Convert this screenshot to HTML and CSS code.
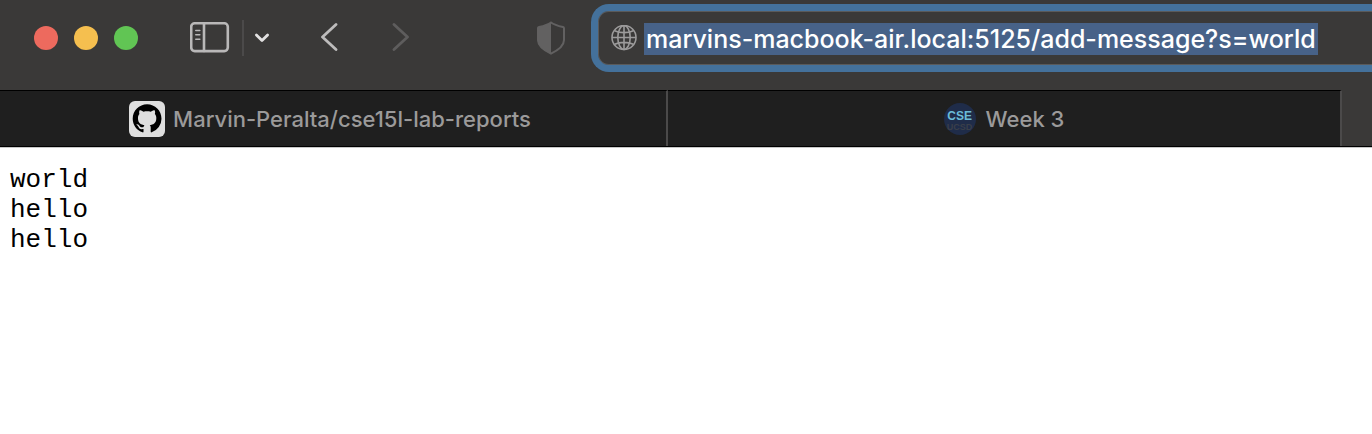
FILE: index.html
```html
<!DOCTYPE html>
<html lang="en">
<head>
<meta charset="utf-8">
<title>add-message</title>
<link rel="stylesheet" href="styles.css">
</head>
<body>
<header class="toolbar">
  <div class="window-controls">
    <button class="dot dot-close" aria-label="Close"></button>
    <button class="dot dot-minimize" aria-label="Minimize"></button>
    <button class="dot dot-zoom" aria-label="Zoom"></button>
  </div>
  <div class="sidebar-controls">
    <button class="icon-button" aria-label="Show sidebar">
      <svg width="40" height="32" viewBox="0 0 40 32" fill="none" stroke="#b9b8b8" stroke-width="2.6" stroke-linecap="round">
        <rect x="1.2" y="1.300" width="36.6" height="27.8" rx="3.5"/>
        <path d="M14 1.300V29"/>
        <path d="M5.8 8.500h4M5.8 12.800h4M5.8 17.200h4" stroke-width="1.6"/>
      </svg>
    </button>
    <span class="separator"></span>
    <button class="icon-button" aria-label="Tab groups">
      <svg width="16" height="12" viewBox="0 0 16 12" fill="none" stroke="#e2e1e1" stroke-width="2.8" stroke-linecap="round" stroke-linejoin="round"><path d="M2.4 3l5.6 5.6L13.6 3"/></svg>
    </button>
  </div>
  <div class="history-controls">
    <button class="icon-button" aria-label="Back">
      <svg width="18" height="30" viewBox="0 0 18 30" fill="none" stroke="#bdbcbc" stroke-width="2.8" stroke-linecap="round" stroke-linejoin="round"><path d="M16 1.500L2.5 14 16 26.500"/></svg>
    </button>
    <button class="icon-button" aria-label="Forward">
      <svg width="18" height="30" viewBox="0 0 18 30" fill="none" stroke="#5e5d5d" stroke-width="2.8" stroke-linecap="round" stroke-linejoin="round"><path d="M2 1.500L15.500 14 2 26.500"/></svg>
    </button>
  </div>
  <button class="icon-button" aria-label="Privacy report">
    <svg width="28" height="34" viewBox="0 0 28 34">
      <path d="M14 1.500C17 3.700 21.500 5 26 6c.7.200 1 .7 1 1.300V19c0 6.500-6.500 10.500-13 13.600C7.500 29.500 1 25.500 1 19V7.300C1 6.700 1.300 6.200 2 6 6.500 5 11 3.700 14 1.500z" fill="none" stroke="#626161" stroke-width="2"/>
      <path d="M14 1C11 3.500 6.500 5 1.500 6 1 6.200.5 6.600.5 7.300V19c0 6.500 7 11 13.500 14z" fill="#626161"/>
    </svg>
  </button>
  <label class="address">
    <svg width="26" height="26" viewBox="0 0 26 26" fill="none" stroke="#9c9b9b" stroke-width="1.6">
      <circle cx="13" cy="12.500" r="12"/>
      <ellipse cx="13" cy="12.500" rx="6.200" ry="12"/>
      <path d="M13 .5v24M1 12.500h24M3.600 5.700c5.500 2.600 13.300 2.600 18.800 0M3.600 19.300c5.500-2.600 13.300-2.600 18.800 0"/>
    </svg>
    <input class="url" type="text" size="46" aria-label="Address" spellcheck="false" value="marvins-macbook-air.local:5125/add-message?s=world">
  </label>
</header>
<nav class="tabs">
  <a class="tab tab-reports" href="#reports">
    <svg width="36" height="36" viewBox="0 0 36 36">
      <rect width="36" height="36" rx="6" fill="#dfdfdf"/>
      <path transform="translate(3.700 3.300) scale(1.800)" fill="#000" d="M8 0C3.580 0 0 3.580 0 8c0 3.540 2.290 6.530 5.470 7.590.4.070.55-.17.55-.38 0-.19-.01-.82-.01-1.490-2.010.37-2.530-.49-2.690-.94-.09-.23-.48-.94-.82-1.130-.28-.15-.68-.52-.01-.53.63-.01 1.080.58 1.230.82.72 1.210 1.870.87 2.330.66.07-.52.28-.87.51-1.070-1.780-.2-3.640-.89-3.640-3.950 0-.87.31-1.590.82-2.150-.08-.2-.36-1.020.08-2.120 0 0 .67-.21 2.200.82.64-.18 1.320-.27 2-.27s1.360.09 2 .27c1.530-1.040 2.200-.82 2.200-.82.44 1.100.16 1.920.08 2.120.51.56.82 1.270.82 2.150 0 3.070-1.870 3.750-3.650 3.950.29.25.54.73.54 1.480 0 1.070-.01 1.930-.01 2.200 0 .21.15.46.55.38A8.010 8.010 0 0 0 16 8c0-4.420-3.580-8-8-8z"/>
    </svg>
    <span>Marvin-Peralta/cse15l-lab-reports</span>
  </a>
  <a class="tab" href="#week3">
    <span class="cse-icon"><span class="cse-top">CSE</span><span class="cse-bottom">UCSD</span></span>
    <span>Week 3</span>
  </a>
</nav>
<main class="page">
<pre class="messages">world
hello
hello</pre>
</main>
</body>
</html>
```
FILE: styles.css
```css
* { box-sizing: border-box; }

body {
  margin: 0;
  background: #fff;
  font-family: Inter, "Liberation Sans", sans-serif;
  overflow-x: hidden;
}

button {
  padding: 0;
  border: 0;
  background: none;
}

svg { display: block; flex: none; }

.toolbar {
  display: flex;
  align-items: center;
  height: 90px;
  padding: 0 0 14px 34px;
  background: #3a3938;
}

.window-controls {
  display: flex;
  gap: 16px;
  margin-right: 52px;
}

.dot {
  width: 24px;
  height: 24px;
  border-radius: 50%;
}

.dot-close { background: #ed6a5e; }
.dot-minimize { background: #f5bf4f; }
.dot-zoom { background: #61c554; }

.sidebar-controls {
  display: flex;
  align-items: center;
  gap: 12px;
  margin-right: 50px;
}

.separator {
  width: 2px;
  height: 36px;
  background: #4b4a4a;
}

.sidebar-controls .icon-button:last-child { margin-left: -2px; }

.history-controls {
  display: flex;
  gap: 54px;
  margin-right: 127px;
}

.address {
  display: flex;
  flex: 1;
  align-items: center;
  gap: 7px;
  min-width: 0;
  height: 68px;
  margin-left: 26px;
  padding-left: 13px;
  border: 7px solid #44719b;
  border-right: 0;
  border-radius: 18px 0 0 18px;
  box-shadow: inset 0 1px #5a5a5a, inset 0 -1px #5a5a5a, inset 1px 0 #5a5a5a;
}

.url {
  field-sizing: content;
  height: 32px;
  margin-top: 2px;
  padding: 0 2px;
  border: 0;
  outline: 0;
  background: #476288;
  color: #fff;
  font: 500 25px/32px Inter, "Liberation Sans", sans-serif;
}

.tabs {
  display: flex;
  height: 57px;
  padding-right: 30px;
  border-bottom: 1px solid #000;
  background: #3a3938;
}

.tab {
  display: flex;
  flex: 672 1 0;
  align-items: center;
  justify-content: center;
  gap: 8px;
  border-top: 1px solid #000;
  border-right: 2px solid #4b4a4a;
  background: #1f1f1f;
  color: #9b9a9a;
  font-size: 22px;
  font-weight: 500;
  text-decoration: none;
}

.tab-reports {
  flex-grow: 660;
  padding-right: 6px;
}

.cse-icon {
  display: flex;
  flex-direction: column;
  align-items: center;
  justify-content: center;
  width: 32px;
  height: 32px;
  margin-right: 2px;
  padding-top: 4px;
  border-radius: 50%;
  background: #1f2c49;
  font: 700 12px/12px "Liberation Sans", sans-serif;
}

.cse-top { color: #6bbbd8; }
.cse-bottom { color: #3a3f49; font-size: 9px; line-height: 10px; }

.page {
  padding: 17px 10px;
  border-top: 1px solid #c8c8c8;
}

.messages {
  margin: 0;
  color: #000;
  font: 26px/30px "Liberation Mono", monospace;
}
```
